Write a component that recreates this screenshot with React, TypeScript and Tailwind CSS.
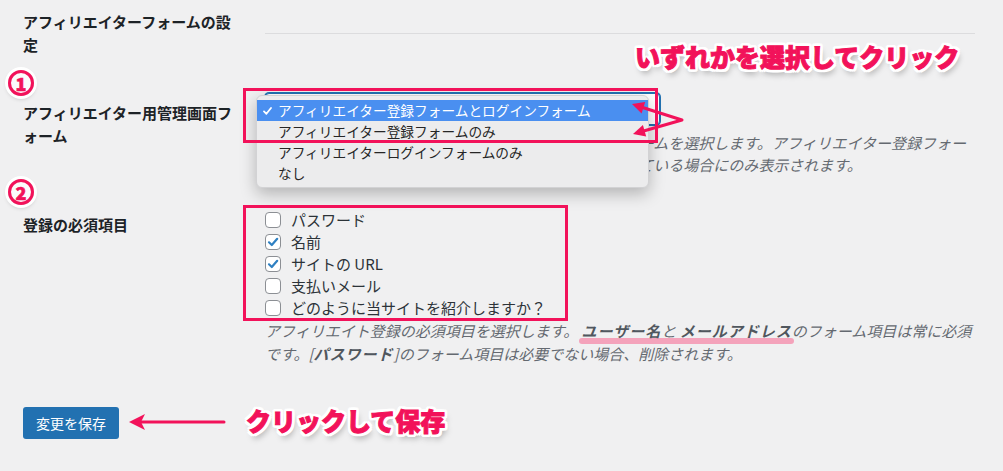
import React from "react";

const OUTLINE =
  "[text-shadow:3px_0_0_#fff,-3px_0_0_#fff,0_3px_0_#fff,0_-3px_0_#fff,2px_2px_0_#fff,-2px_2px_0_#fff,2px_-2px_0_#fff,-2px_-2px_0_#fff,3px_2px_0_#fff,-3px_2px_0_#fff,3px_-2px_0_#fff,-3px_-2px_0_#fff,2px_3px_0_#fff,-2px_3px_0_#fff,2px_-3px_0_#fff,-2px_-3px_0_#fff,2px_5px_6px_rgba(0,0,0,0.35)]";

const MENU_ITEMS = [
  "アフィリエイター登録フォームとログインフォーム",
  "アフィリエイター登録フォームのみ",
  "アフィリエイターログインフォームのみ",
  "なし",
];

const FIELDS = [
  { label: "パスワード", checked: false },
  { label: "名前", checked: true },
  { label: "サイトの URL", checked: true },
  { label: "支払いメール", checked: false },
  { label: "どのように当サイトを紹介しますか？", checked: false },
];

function Checkbox({ checked }: { checked: boolean }) {
  return (
    <span className="flex h-[16px] w-[16px] shrink-0 items-center justify-center rounded-[4px] border border-[#8c8f94] bg-white">
      {checked && (
        <svg width="12" height="12" viewBox="0 0 12 12" fill="none">
          <path d="M2 6.3 L4.8 9 L10.2 2.8" stroke="#2f80c2" strokeWidth="2.2" strokeLinecap="round" strokeLinejoin="round" />
        </svg>
      )}
    </span>
  );
}

function Circled({ n, className }: { n: string; className: string }) {
  return (
    <span
      className={`absolute flex h-[26px] w-[26px] items-center justify-center rounded-full border-[3px] border-[#f2125a] bg-white/70 text-[18px] font-black leading-none text-[#f2125a] shadow-[0_0_0_3px_#fff,0_2px_5px_rgba(0,0,0,0.3)] [-webkit-text-stroke:0.6px_#f2125a] ${className}`}
    >
      {n}
    </span>
  );
}

export default function App() {
  return (
    <div className="relative isolate h-[471px] w-[1003px] overflow-hidden bg-[#f0f0f1] font-['Noto_Sans_CJK_JP','Noto_Sans',sans-serif] text-[#1d2327]">
      <div className="pl-[23px] pt-[10px]">
        {/* section heading */}
        <div className="flex">
          <h2 className="w-[242px] shrink-0 text-[15px] font-bold leading-[23px]">
            アフィリエイターフォームの設
            <br />定
          </h2>
          <div className="mt-[23px] h-px w-[710px] bg-[#dcdcde]" />
        </div>

        {/* form select */}
        <div className="mt-[37px] flex">
          <div className="w-[242px] shrink-0 pt-[8px] text-[15px] font-bold leading-[23px]">
            アフィリエイター用管理画面フ
            <br />
            ォーム
          </div>
          <div>
            <div className="h-[32px] w-[395px] rounded-[4px] border border-[#2271b1] bg-white shadow-[0_0_0_1px_#2271b1]" />
            <p className="mt-[7px] whitespace-nowrap text-[15px] italic leading-[22px] text-[#646970]">
              アフィリエイター用の管理画面ページに表示させるフォームを選択します。アフィリエイター登録フォー
              <br />
              ムは、設定でアフィリエイターの新規登録が有効になっている場合にのみ表示されます。
            </p>
          </div>
        </div>

        {/* required fields */}
        <div className="mt-[33px] flex">
          <div className="w-[242px] shrink-0 pt-[4px] text-[15px] font-bold leading-[23px]">登録の必須項目</div>
          <div>
            <ul>
              {FIELDS.map((f) => (
                <li key={f.label} className="flex h-[22px] items-center gap-[10px] text-[15px] text-[#2c3338]">
                  <Checkbox checked={f.checked} />
                  <span>{f.label}</span>
                </li>
              ))}
            </ul>
            <p className="whitespace-nowrap text-[15px] italic leading-[23px] text-[#646970]">
              アフィリエイト登録の必須項目を選択します。{" "}
              <span className="relative">
                <b className="tracking-[1px] text-[#50575e]">ユーザー名</b>と{" "}
                <b className="tracking-[1px] text-[#50575e]">メールアドレス</b>
                <span className="absolute bottom-[-3px] left-[-3px] right-[-2px] -z-10 h-[6px] rounded-full bg-[#f4a3bb]" />
              </span>
              のフォーム項目は常に必須
              <br />
              です。[<b className="tracking-[1px] text-[#50575e]">パスワード</b>]のフォーム項目は必要でない場合、削除されます。
            </p>
          </div>
        </div>

        <button
          type="button"
          className="mt-[42px] h-[32px] w-[96px] rounded-[3px] bg-[#2271b1] text-[14px] text-white"
        >
          変更を保存
        </button>
      </div>

      {/* native select popup */}
      <div className="absolute left-[256px] top-[95px] w-[393px] rounded-[6px] border border-[#d2d2d4] bg-[#ececed] pb-[3px] pt-[4px] text-[13.7px] text-[#262626] shadow-[0_6px_16px_rgba(0,0,0,0.25)]">
        {MENU_ITEMS.map((item, i) => (
          <div
            key={item}
            className={`flex h-[21px] items-center ${i === 0 ? "bg-[#4a8ff0] text-white" : ""}`}
          >
            <span className="flex w-[21px] justify-center">
              {i === 0 && (
                <svg width="9" height="8" viewBox="0 0 9 8" fill="none">
                  <path d="M1 4.4 L3.4 6.8 L8 1" stroke="#fff" strokeWidth="1.8" strokeLinecap="round" strokeLinejoin="round" />
                </svg>
              )}
            </span>
            <span>{item}</span>
          </div>
        ))}
      </div>

      {/* annotations */}
      <div className="absolute left-[243px] top-[88px] h-[55px] w-[415px] border-[3px] border-[#f2125a]" />
      <div className="absolute left-[243px] top-[205px] h-[116px] w-[325px] border-[3px] border-[#f2125a]" />

      <svg className="pointer-events-none absolute inset-0" width="1003" height="471" viewBox="0 0 1003 471" fill="none">
        <path d="M682 120 L643.4 107.7 M682 120 L644.5 130.7" stroke="#f2125a" strokeWidth="3" strokeLinecap="round" />
        <path d="M632 104 L645.2 102 L641.6 113.4 Z" fill="#f2125a" />
        <path d="M633 134 L642.9 124.9 L646.2 136.5 Z" fill="#f2125a" />
        <path d="M224 422 L140 422" stroke="#f2125a" strokeWidth="3" strokeLinecap="round" />
        <path d="M129 422 L145 414 L141 422 L145 430 Z" fill="#f2125a" />
      </svg>

      <Circled n="1" className="left-[8px] top-[70px]" />
      <Circled n="2" className="left-[8px] top-[179px]" />

      <div className={`absolute left-[635px] top-[42px] whitespace-nowrap text-[25px] font-black leading-[28px] text-[#f2125a] [-webkit-text-stroke:1px_#f2125a] ${OUTLINE}`}>
        いずれかを選択してクリック
      </div>
      <div className={`absolute left-[246px] top-[406px] whitespace-nowrap text-[25px] font-black leading-[28px] text-[#f2125a] [-webkit-text-stroke:1px_#f2125a] ${OUTLINE}`}>
        クリックして保存
      </div>
    </div>
  );
}
